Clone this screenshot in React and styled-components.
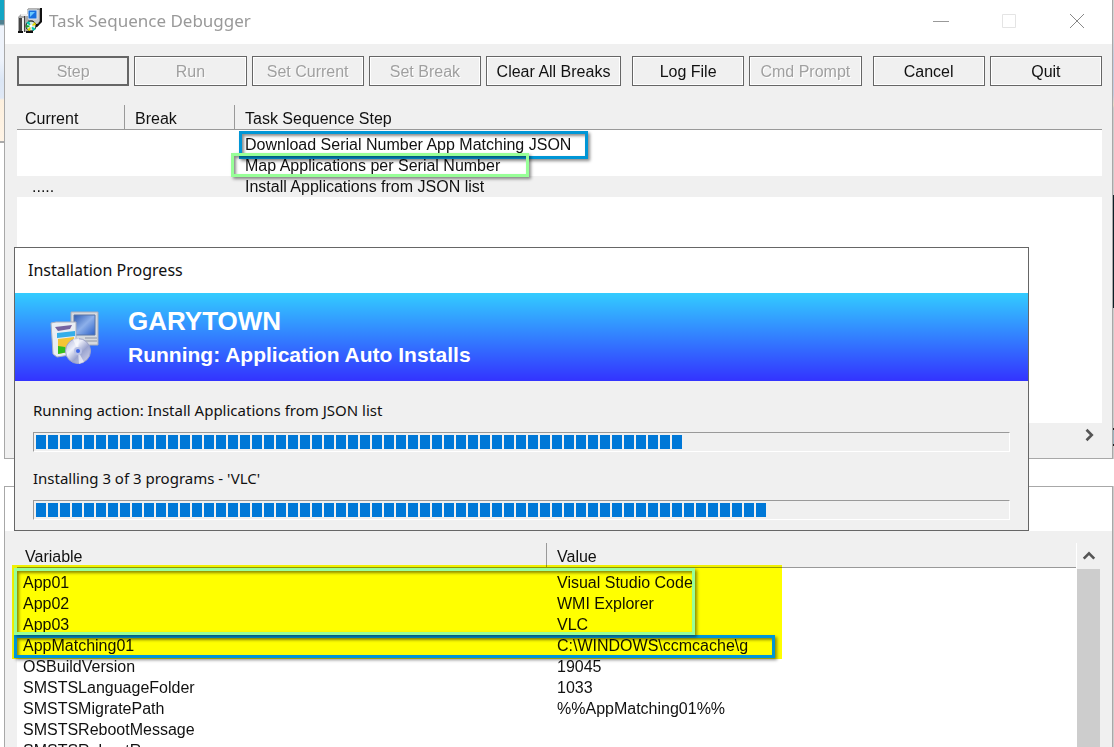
import React from "react";
import styled, { createGlobalStyle, css } from "styled-components";

const Global = createGlobalStyle`
  * { box-sizing: border-box; }
  html, body, #root { height: 100%; }
  body { margin: 0; overflow: hidden; background: #fff; color: #111; font: 16px/21px "Liberation Sans", Arial, sans-serif; }
`;

const Desktop = styled.main`
  position: relative;
  height: 100%;
  min-height: 560px;
  overflow: hidden;
  background: #fff;
`;

const Strip = styled.div`
  position: absolute;
  top: 0;
  bottom: 0;
  ${(p) => (p.$side === "left" ? "left: 0;" : "right: 0;")}
  width: 5px;
  background: ${(p) =>
    p.$side === "left"
      ? "linear-gradient(#12a5c4 0 20px, #4f8090 20px 24px, #eef3fb 26px 60px, #dbe6f5 80px, #dfe8f5 98px, #fdf0de 100px, #fff4e6 141px, #aaa 141px 143px, #fff 143px)"
      : "linear-gradient(#d4d4d4 0 30px, #c3cbe0 60px 95px, #ead9c4 105px, #ccc 108px 195px, #0c2026 195px 308px, #ccc 308px 428px, #222 428px 430px, #9cb4c0 430px 444px, #222 444px 446px, #ccc 446px 459px, #fff 459px 486px, #ccc 486px)"};
`;

const Window = styled.section`
  position: absolute;
  left: 4px;
  right: 1px;
  top: ${(p) => p.$top}px;
  ${(p) => (p.$height ? `height: ${p.$height}px;` : "bottom: -40px;")}
  display: flex;
  flex-direction: column;
  border: 1px solid #a8a8a8;
  ${(p) => p.$top === 0 && "border-top: 0;"}
  background: #f0f0f0;
`;

const TitleBar = styled.header`
  display: flex;
  align-items: center;
  flex: none;
  height: 44px;
  padding: 0 19px 3px 13px;
  gap: 7px;
  background: #fff;
`;

const WindowTitle = styled.h1`
  flex: 1;
  margin: 0;
  color: #999;
  font: 400 17px/24px "Noto Sans", sans-serif;
`;

const Caption = styled.button`
  display: grid;
  place-items: center;
  width: 32px;
  height: 32px;
  margin-left: 29px;
  padding: 0;
  border: 0;
  background: none;
`;

const Body = styled.div`
  display: flex;
  flex-direction: column;
  flex: 1;
  min-height: 0;
  padding: 12px 10px 11px 12px;
`;

const Toolbar = styled.div`
  display: flex;
  flex: none;
  gap: 5px;
`;

const ToolButton = styled.button`
  flex: ${(p) => (p.$wide ? 135 : 112)} 1 0;
  height: 30px;
  margin-left: ${(p) => (p.$apart ? 6 : 0)}px;
  padding: 0;
  border: 1px solid #666;
  box-shadow: inset 0 0 0 1px ${(p) => (p.$default ? "#666" : "#fff")};
  background: #f0f0f0;
  color: #111;
  font: 16px/21px "Liberation Sans", Arial, sans-serif;
  white-space: nowrap;
  &:disabled { color: #a0a0a0; text-shadow: 1px 1px #fff; }
`;

const ListArea = styled.div`
  position: relative;
  display: flex;
  flex: 1;
  min-height: 0;
  margin-top: ${(p) => p.$gap}px;
`;

const Sheet = styled.div`
  flex: 1;
  min-width: 0;
  background: #fff;
`;

const Table = styled.table`
  width: 100%;
  table-layout: fixed;
  border-collapse: separate;
  border-spacing: 0;
  thead::after { content: ""; display: block; height: 4px; }
`;

const Head = styled.th`
  width: ${(p) => (p.$width ? `${p.$width}px` : "auto")};
  height: 25px;
  padding: 4px 0 0 ${(p) => p.$pad || 10}px;
  border-bottom: 1px solid #999;
  ${(p) => p.$width && css`border-right: 1px solid #999;`}
  background: #f0f0f0;
  font-weight: 400;
  line-height: 20px;
  text-align: left;
`;

const Cell = styled.td`
  height: 21px;
  padding: 0 0 0 ${(p) => p.$pad || 10}px;
  line-height: 21px;
  white-space: nowrap;
  background: ${(p) => (p.$active ? "#f0f0f0" : "none")};
`;

const Mark = styled.div`
  position: absolute;
  left: ${(p) => p.$x}px;
  top: ${(p) => p.$y}px;
  width: ${(p) => p.$w}px;
  height: ${(p) => p.$h}px;
  border: 3px solid ${(p) => p.$color};
  box-shadow: 2px 2px 3px rgba(0, 0, 0, 0.45), inset 2px 2px 3px rgba(0, 0, 0, 0.45);
  pointer-events: none;
`;

const Highlight = styled.div`
  position: absolute;
  left: -5px;
  top: 22px;
  width: 770px;
  height: 94px;
  background: #ff0;
  mix-blend-mode: multiply;
  pointer-events: none;
`;

const BottomScroll = styled.div`
  display: flex;
  justify-content: flex-end;
  flex: none;
  height: 24px;
`;

const SideScroll = styled.div`
  display: flex;
  flex-direction: column;
  flex: none;
  width: 25px;
  margin-right: 1px;
  border-left: 1px solid #fff;
  background: #f0f0f0;
`;

const Thumb = styled.div`
  flex: 1;
  margin-right: 1px;
  background: #cdcdcd;
`;

const ScrollButton = styled.button`
  display: grid;
  place-items: center;
  width: 24px;
  height: ${(p) => p.$h}px;
  padding: 0;
  border: 0;
  background: none;
`;

const Dialog = styled.section`
  position: absolute;
  left: 14px;
  right: 85px;
  top: 247px;
  border: 1px solid #666;
  background: #f0f0f0;
`;

const DialogTitle = styled.h2`
  margin: 0;
  padding: 10px 13px 11px;
  background: #fff;
  font: 400 16px/24px "Noto Sans", sans-serif;
`;

const Banner = styled.div`
  display: flex;
  align-items: center;
  gap: 28px;
  height: 88px;
  padding: 1px 0 0 35px;
  background: linear-gradient(#33ccff, #3333ff);
  color: #fff;
`;

const BannerTitle = styled.p`
  margin: 0;
  font: 700 26px/30px "Liberation Sans", Arial, sans-serif;
`;

const BannerText = styled.p`
  margin: 4px 0 0;
  font: 700 21px/30px "Liberation Sans", Arial, sans-serif;
`;

const Progresses = styled.div`
  display: flex;
  flex-direction: column;
  gap: 15px;
  padding: 18px 18px 10px;
`;

const Task = styled.label`
  display: block;
  font: 15px/22px "Noto Sans", sans-serif;
`;

const Bar = styled.progress`
  display: block;
  width: 100%;
  height: 20px;
  margin-top: 11px;
  padding: 2px;
  appearance: none;
  border: 1px solid;
  border-color: #999 #fff #fff #999;
  background: #f0f0f0;
  &::-webkit-progress-bar { background: #f0f0f0; }
  &::-webkit-progress-value { background: repeating-linear-gradient(90deg, #0078d7 0 10px, #f0f0f0 10px 12px); }
`;

const SmallIcon = () => (
  <svg width="24" height="26" viewBox="0 0 24 26" aria-hidden="true">
    <path d="M10 1h12v14h-2v3h-5v-5h-5z" fill="#c4c8cc" stroke="#666" />
    <path d="M22 0h2v14l-5 5h-2v-3h3l2-3z" fill="#111" />
    <path d="M10 2h9v9h-9z" fill="#1670e0" stroke="#dce4ea" />
    <path d="M12 4h5l-5 5z" fill="#67c8ff" />
    <path d="M0 9l3-3h7v18H0z" fill="#aaa" />
    <path d="M1 10h3v13H1zM6 8h1v16H6z" fill="#444" />
    <path d="M3 6h7v2H3zM4 10h2v14H4z" fill="#eee" />
    <circle cx="13" cy="18" r="5" fill="#d5eadf" stroke="#111" />
    <path d="M13 18l-5-3 3-2zM13 18l5 3-3 2z" fill="#00c8b0" />
    <path d="M13 18l4-4 1 3zM13 18l-4 4 3 1z" fill="#e8d800" />
    <path d="M13 18l-5-1v3z" fill="#18a030" />
    <circle cx="13" cy="18" r="1.5" fill="#fff" />
    <path d="M0 24h5M8 24h7" stroke="#111" strokeWidth="2" />
  </svg>
);

const SetupIcon = () => (
  <svg width="50" height="54" viewBox="0 0 50 54" aria-hidden="true">
    <defs>
      <linearGradient id="screen" x1="0" y1="0" x2="1" y2="1">
        <stop offset="0" stopColor="#2f5cb4" />
        <stop offset="0.5" stopColor="#8db0ea" />
        <stop offset="1" stopColor="#2b60c8" />
      </linearGradient>
      <linearGradient id="disc" x1="0" y1="0" x2="1" y2="1">
        <stop offset="0" stopColor="#a9b0d8" />
        <stop offset="0.35" stopColor="#eef0fa" />
        <stop offset="0.6" stopColor="#9ba4cf" />
        <stop offset="1" stopColor="#d8daf0" />
      </linearGradient>
    </defs>
    <path d="M21 1h27v33H21z" fill="#d5d9df" stroke="#a5abb8" />
    <path d="M24 4h21v20H24z" fill="url(#screen)" stroke="#5b76a8" />
    <path d="M35 27h12M35 30h12" stroke="#8d94a4" />
    <path d="M1 12l5-1h20v32l-19 3-4-3z" fill="#e9edf3" stroke="#aab0bf" />
    <path d="M5 16l17-2-2 4-12 2z" fill="#7563a0" />
    <path d="M7 22l18-2v5L7 27z" fill="#35aee8" />
    <path d="M8 28l16-2v14L8 43z" fill="#f5c535" />
    <path d="M8 35l7 1 3 5-10 2z" fill="#30bd20" />
    <circle cx="28" cy="40" r="12.5" fill="url(#disc)" stroke="#a0a5c8" />
    <path d="M28 40l-5-12 6-1zM28 40l6 11-5 2z" fill="#fff" opacity="0.6" />
    <circle cx="28" cy="40" r="4" fill="#b9c1e6" />
    <circle cx="28" cy="40" r="2" fill="#4168e8" />
  </svg>
);

const Glyph = ({ d, size = 16, color = "#999", width = 1 }) => (
  <svg width={size} height={size} viewBox="0 0 16 16" aria-hidden="true">
    <path d={d} fill="none" stroke={color} strokeWidth={width} />
  </svg>
);

const tools = [
  { label: "Step", off: true, primary: true },
  { label: "Run", off: true },
  { label: "Set Current", off: true },
  { label: "Set Break", off: true },
  { label: "Clear All Breaks", wide: true },
  { label: "Log File", apart: true },
  { label: "Cmd Prompt", off: true },
  { label: "Cancel", apart: true },
  { label: "Quit" },
];

const steps = [
  { name: "Download Serial Number App Matching JSON" },
  { name: "Map Applications per Serial Number" },
  { name: "Install Applications from JSON list", current: "....." },
];

const variables = [
  ["App01", "Visual Studio Code"],
  ["App02", "WMI Explorer"],
  ["App03", "VLC"],
  ["AppMatching01", "C:\\WINDOWS\\ccmcache\\g"],
  ["OSBuildVersion", "19045"],
  ["SMSTSLanguageFolder", "1033"],
  ["SMSTSMigratePath", "%%AppMatching01%%"],
  ["SMSTSRebootMessage", ""],
  ["SMSTSRebootReason", ""],
];

const BLUE = "#0096d6";
const GREEN = "#98ff98";

export default function App() {
  return (
    <>
      <Global />
      <Desktop>
        <Strip $side="left" />
        <Strip $side="right" />
        <Window $top={0} $height={459}>
          <TitleBar>
            <SmallIcon />
            <WindowTitle>Task Sequence Debugger</WindowTitle>
            <Caption aria-label="Minimize"><Glyph d="M0 8.5h16" /></Caption>
            <Caption aria-label="Maximize" disabled><Glyph d="M1.5 1.5h13v13h-13z" color="#e4e4e4" /></Caption>
            <Caption aria-label="Close"><Glyph d="M1 1l14 14M15 1L1 15" color="#888" /></Caption>
          </TitleBar>
          <Body>
            <Toolbar>
              {tools.map((t) => (
                <ToolButton key={t.label} disabled={t.off} $default={t.primary} $wide={t.wide} $apart={t.apart}>
                  {t.label}
                </ToolButton>
              ))}
            </Toolbar>
            <ListArea $gap={19}>
              <Sheet>
                <Table>
                  <thead>
                    <tr>
                      <Head $width={108} $pad={8}>Current</Head>
                      <Head $width={110}>Break</Head>
                      <Head>Task Sequence Step</Head>
                    </tr>
                  </thead>
                  <tbody>
                    {steps.map((s) => (
                      <tr key={s.name}>
                        <Cell $pad={15} $active={s.current}>{s.current}</Cell>
                        <Cell $active={s.current} />
                        <Cell $active={s.current}>{s.name}</Cell>
                      </tr>
                    ))}
                  </tbody>
                </Table>
              </Sheet>
              <Mark $x={222} $y={26} $w={349} $h={28} $color={BLUE} />
              <Mark $x={214} $y={48} $w={298} $h={24} $color={GREEN} />
            </ListArea>
            <BottomScroll>
              <ScrollButton $h={24} aria-label="Scroll right">
                <Glyph d="M4 2l6 6-6 6" color="#555" width={3} size={14} />
              </ScrollButton>
            </BottomScroll>
          </Body>
        </Window>

        <Window $top={486}>
          <TitleBar />
          <Body>
            <ListArea $gap={0}>
              <Sheet>
                <Table>
                  <thead>
                    <tr>
                      <Head $width={530} $pad={8}>Variable</Head>
                      <Head>Value</Head>
                    </tr>
                  </thead>
                  <tbody>
                    {variables.map(([name, value]) => (
                      <tr key={name}>
                        <Cell $pad={6}>{name}</Cell>
                        <Cell>{value}</Cell>
                      </tr>
                    ))}
                  </tbody>
                </Table>
              </Sheet>
              <SideScroll>
                <ScrollButton $h={26} aria-label="Scroll up">
                  <Glyph d="M2 11l6-6 6 6" color="#555" width={3} size={14} />
                </ScrollButton>
                <Thumb />
              </SideScroll>
              <Highlight />
              <Mark $x={-3} $y={92} $w={761} $h={23} $color={BLUE} />
              <Mark $x={-3} $y={25} $w={681} $h={67} $color={GREEN} />
            </ListArea>
          </Body>
        </Window>

        <Dialog role="dialog" aria-labelledby="progress-title">
          <DialogTitle id="progress-title">Installation Progress</DialogTitle>
          <Banner>
            <SetupIcon />
            <div>
              <BannerTitle>GARYTOWN</BannerTitle>
              <BannerText>Running: Application Auto Installs</BannerText>
            </div>
          </Banner>
          <Progresses>
            <Task>
              Running action: Install Applications from JSON list
              <Bar value={646} max={971} />
            </Task>
            <Task>
              Installing 3 of 3 programs - 'VLC'
              <Bar value={730} max={971} />
            </Task>
          </Progresses>
        </Dialog>
      </Desktop>
    </>
  );
}
